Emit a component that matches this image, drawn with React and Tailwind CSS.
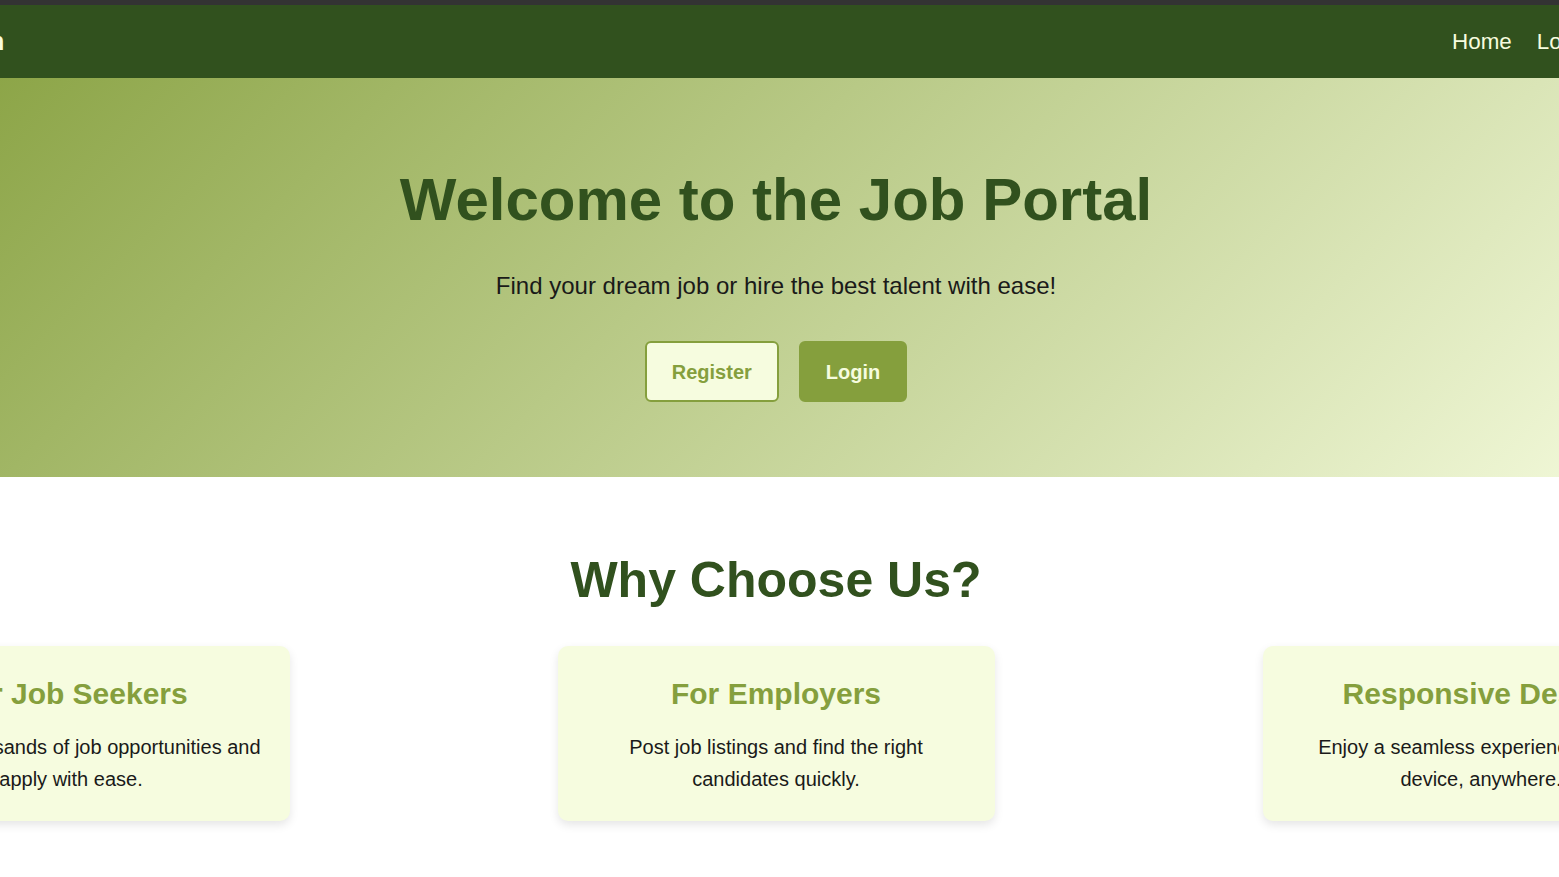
const features = [
  {
    title: "For Job Seekers",
    text: "Explore thousands of job opportunities and apply with ease.",
  },
  {
    title: "For Employers",
    text: "Post job listings and find the right candidates quickly.",
  },
  {
    title: "Responsive Design",
    text: "Enjoy a seamless experience on any device, anywhere.",
  },
];

function Navbar() {
  return (
    <nav className="flex h-[73px] items-center bg-[#31511E] pl-[34px] pr-[6px] text-[#F6FCDF]">
      <span className="text-[26px] font-bold">JobHaven</span>
      <div className="ml-auto flex items-center gap-[25px] text-[22.4px]">
        <a href="#">Home</a>
        <a href="#">Login</a>
        <a href="#">Register</a>
      </div>
    </nav>
  );
}

function Hero() {
  return (
    <section className="flex flex-col items-center bg-[linear-gradient(135deg,#859F3D,#F6FCDF)] pt-[92px] pb-[75px] text-center">
      <h1 className="text-[60px] font-bold leading-none text-[#31511E]">
        Welcome to the Job Portal
      </h1>
      <p className="mt-[38px] text-2xl leading-[36px] text-[#1A1A19]">
        Find your dream job or hire the best talent with ease!
      </p>
      <div className="mt-[37px] flex gap-5">
        <button className="h-[61px] rounded-md border-2 border-[#859F3D] bg-[#F6FCDF] px-[25px] text-xl font-bold text-[#859F3D]">
          Register
        </button>
        <button className="h-[61px] rounded-md border-2 border-[#859F3D] bg-[#859F3D] px-[25px] text-xl font-bold text-[#F6FCDF]">
          Login
        </button>
      </div>
    </section>
  );
}

function Features() {
  return (
    <section className="flex flex-col items-center pt-[78px] pb-16 text-center">
      <h2 className="text-[50px] font-bold leading-none text-[#31511E]">Why Choose Us?</h2>
      <div className="mt-[41px] flex justify-center gap-[268px]">
        {features.map((f) => (
          <div
            key={f.title}
            className="h-[175px] w-[437px] shrink-0 rounded-[10px] bg-[#F6FCDF] px-[25px] pt-[30px] shadow-[0_4px_10px_rgba(0,0,0,0.1)]"
          >
            <h3 className="text-[30px] font-bold leading-[36px] text-[#859F3D]">{f.title}</h3>
            <p className="mt-[19px] text-xl leading-[32px] text-[#1A1A19]">{f.text}</p>
          </div>
        ))}
      </div>
    </section>
  );
}

export default function App() {
  return (
    <div className="min-h-[877px] overflow-hidden bg-white font-['Liberation_Sans',Arial,sans-serif]">
      <div className="h-[5px] bg-[#333333]" />
      <div className="ml-[-154px] w-[1860px]">
        <Navbar />
        <Hero />
        <Features />
      </div>
    </div>
  );
}
